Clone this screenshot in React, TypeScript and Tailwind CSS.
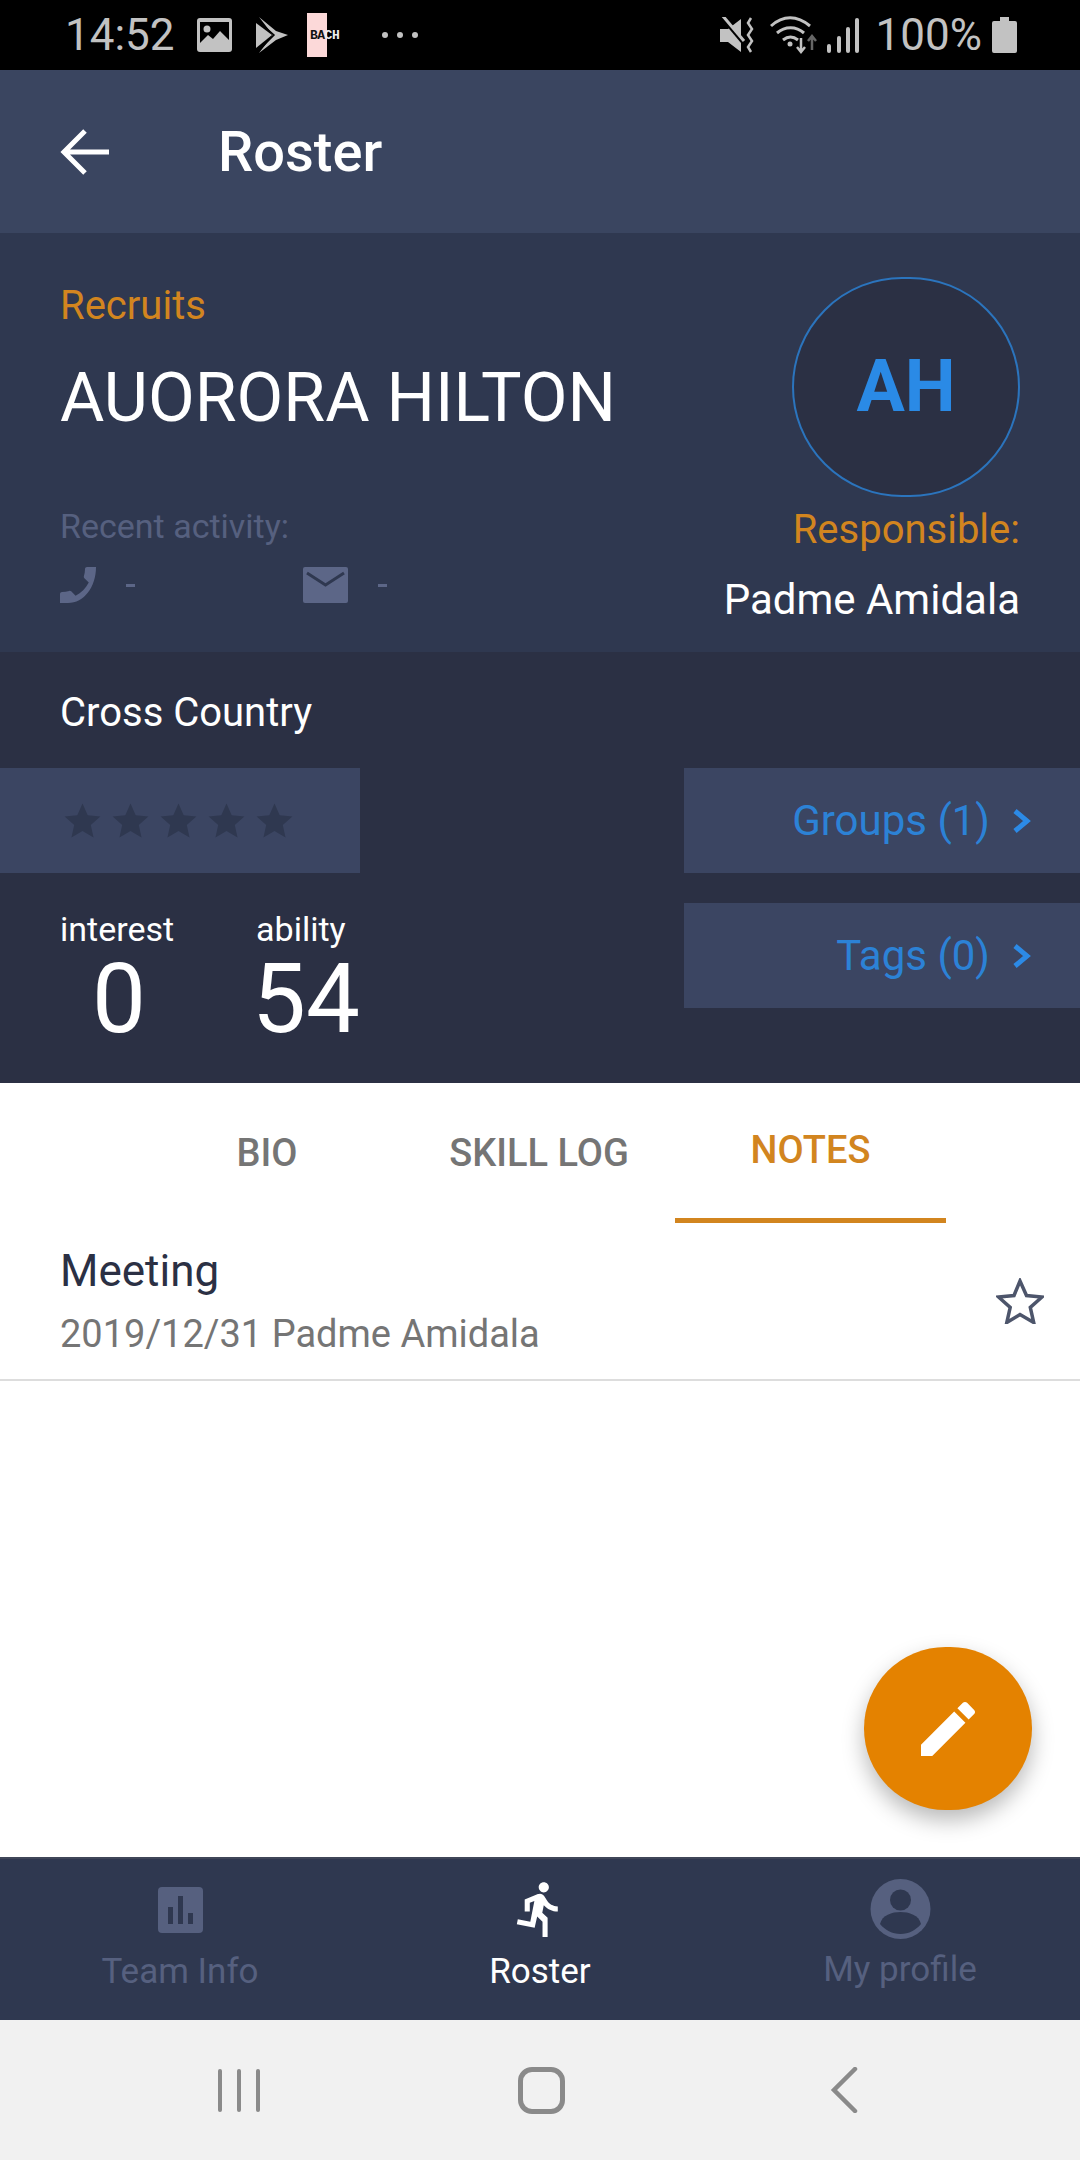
const StatusBar = () => {
  return (
    <div className="flex h-[70px] items-center bg-black pl-[65px] text-[#c2c2c2]">
      <span className="w-[132px] shrink-0 text-[44px] leading-none">14:52</span>
      <svg width="35" height="34" viewBox="0 0 35 34" className="shrink-0">
        <rect width="35" height="34" rx="3" fill="#c2c2c2" />
        <rect x="3" y="4" width="29" height="23" fill="#000" />
        <circle cx="10" cy="11" r="3.5" fill="#c2c2c2" />
        <path d="M3 25l8-8 5 4 7-8 9 9v5H3z" fill="#c2c2c2" />
      </svg>
      <svg width="32" height="36" viewBox="0 0 32 36" className="ml-[24px] shrink-0">
        <path d="M0 6l16 12L0 31z" fill="#c2c2c2" />
        <path d="M3 0l17 14 12 4-12 5L3 36l14-18z" fill="#c2c2c2" />
        <path d="M0 2l18 16L2 34" fill="none" stroke="#000" strokeWidth="1.5" />
      </svg>
      <div className="ml-[19px] flex h-[44px] w-[40px] shrink-0 items-center bg-[linear-gradient(90deg,#fcd9d9_50%,#000_50%)] font-['Liberation_Mono',monospace] text-[13px] font-bold leading-none tracking-[-0.5px] text-[#111]">
        <span className="pl-[3px]">BA</span>
        <span className="text-[#eee]">CH</span>
      </div>
      <div className="ml-[35px] flex shrink-0 gap-[9px]">
        <span className="size-[6px] rounded-full bg-[#c2c2c2]" />
        <span className="size-[6px] rounded-full bg-[#c2c2c2]" />
        <span className="size-[6px] rounded-full bg-[#c2c2c2]" />
      </div>
      <svg width="36" height="37" viewBox="0 0 36 37" className="ml-auto shrink-0">
        <path d="M0 12h8L21 2v33L8 25H0z" fill="#c2c2c2" />
        <path d="M2 1l21 25" stroke="#000" strokeWidth="3" />
        <path d="M2 -2l22 26" stroke="#c2c2c2" strokeWidth="3" />
        <path d="M31 1l-3 5 4 6-4 6 4 6-4 6 3 5" fill="none" stroke="#c2c2c2" strokeWidth="2.5" />
      </svg>
      <svg width="48" height="38" viewBox="0 0 48 38" className="ml-[14px] shrink-0">
        <path d="M1 10C13-1 27-1 40 10M7 17c8-7 19-7 27 0M13 24c5-4 10-4 15 0" fill="none" stroke="#c2c2c2" strokeWidth="3" />
        <circle cx="20" cy="28" r="2.5" fill="#c2c2c2" />
        <path d="M31 22v13M27 31l4 5 4-5" fill="none" stroke="#c2c2c2" strokeWidth="2.5" />
        <path d="M42 34V21M38 25l4-5 4 5" fill="none" stroke="#666" strokeWidth="2.5" />
      </svg>
      <svg width="32" height="35" viewBox="0 0 32 35" className="ml-[9px] shrink-0">
        <rect x="0" y="26" width="4" height="9" rx="2" fill="#c2c2c2" />
        <rect x="10" y="18" width="4" height="17" rx="2" fill="#c2c2c2" />
        <rect x="19" y="9" width="4" height="26" rx="2" fill="#c2c2c2" />
        <rect x="28" y="0" width="4" height="35" rx="2" fill="#c2c2c2" />
      </svg>
      <span className="ml-[17px] shrink-0 text-[44px] leading-none">100%</span>
      <svg width="25" height="36" viewBox="0 0 25 36" className="ml-[10px] mr-[63px] shrink-0">
        <path d="M8 0h9v4h6a2 2 0 012 2v28a2 2 0 01-2 2H2a2 2 0 01-2-2V6a2 2 0 012-2h6z" fill="#c2c2c2" />
      </svg>
    </div>
  );
};

const Star = ({ className }: { className: string }) => {
  return (
    <svg viewBox="0 0 24 24" className={className}>
      <path d="M12 1.5l3.2 7.2 7.8.8-5.9 5.2 1.7 7.7L12 18.4l-6.8 4 1.7-7.7L1 9.5l7.8-.8z" fill="currentColor" />
    </svg>
  );
};

const LinkButton = ({ label }: { label: string }) => {
  return (
    <div className="flex h-[105px] items-center justify-end bg-[#3b4562] pr-[48px] text-[42px] text-[#2c82d6]">
      <span>{label}</span>
      <svg width="20" height="26" viewBox="0 0 20 26" className="ml-[22px]">
        <path d="M3 3l12 10L3 23" fill="none" stroke="#2c8ae6" strokeWidth="5" />
      </svg>
    </div>
  );
};

export default function App() {
  return (
    <div className="flex h-[2160px] w-[1080px] flex-col overflow-hidden bg-white font-['Roboto',sans-serif]">
      <StatusBar />

      <div className="flex h-[163px] items-center bg-[#3a4560] pl-[60px] text-white">
        <svg width="50" height="46" viewBox="0 0 50 46">
          <path d="M25 2L4 23l21 21M4 23h45" fill="none" stroke="#fff" strokeWidth="5" />
        </svg>
        <h1 className="ml-[108px] text-[56px] font-medium leading-none">Roster</h1>
      </div>

      <div className="flex h-[419px] justify-between bg-[#2f3850] px-[60px]">
        <div>
          <p className="pt-[50px] text-[40px] leading-[46px] text-[#d2851f]">Recruits</p>
          <p className="mt-[29px] text-[68px] leading-[80px] text-white">AUORORA HILTON</p>
          <p className="mt-[68px] text-[34px] leading-[40px] text-[#56607f]">Recent activity:</p>
          <div className="mt-[21px] flex items-center text-[#5c6687]">
            <svg width="36" height="36" viewBox="3 3 18 18" className="-scale-x-100">
              <path d="M6.62 10.79c1.44 2.83 3.76 5.14 6.59 6.59l2.2-2.2c.27-.27.67-.36 1.02-.24 1.12.37 2.33.57 3.57.57.55 0 1 .45 1 1V21H17C9 21 3 13 3 3h4.5c.55 0 1 .45 1 1 0 1.25.2 2.45.57 3.57.11.35.03.74-.25 1.02l-2.2 2.2z" fill="currentColor" />
            </svg>
            <span className="ml-[30px] h-[3px] w-[9px] bg-current" />
            <svg width="45" height="36" viewBox="0 0 45 36" className="ml-[168px]">
              <rect width="45" height="36" rx="2" fill="currentColor" />
              <path d="M4 6l18.500 12L41 6" fill="none" stroke="#2f3850" strokeWidth="3" />
            </svg>
            <span className="ml-[30px] h-[3px] w-[9px] bg-current" />
          </div>
        </div>
        <div className="flex flex-col items-end">
          <div className="mt-[44px] flex h-[220px] w-[228px] items-center justify-center rounded-full border-2 border-[#2b74bd] bg-[#2b3044] text-[72px] font-bold leading-none text-[#2a8ae6]">
            AH
          </div>
          <p className="mt-[10px] text-[40px] leading-[46px] text-[#d2851f]">Responsible:</p>
          <p className="mt-[22px] text-[42px] leading-[50px] text-white">Padme Amidala</p>
        </div>
      </div>

      <div className="h-[431px] bg-[#2b3044]">
        <p className="pl-[60px] pt-[38px] text-[40px] leading-[46px] text-white">Cross Country</p>
        <div className="mt-[32px] flex justify-between">
          <div className="w-[360px]">
            <div className="flex h-[105px] items-center gap-[9px] bg-[#3b4562] pl-[63px] text-[#2f3850]">
              <Star className="size-[39px]" />
              <Star className="size-[39px]" />
              <Star className="size-[39px]" />
              <Star className="size-[39px]" />
              <Star className="size-[39px]" />
            </div>
            <div className="mt-[36px] flex pl-[60px] text-white">
              <div className="w-[242px]">
                <p className="text-[34px] leading-[40px]">interest</p>
                <p className="pl-[32px] text-[96px] leading-[100px]">0</p>
              </div>
              <div>
                <p className="text-[34px] leading-[40px]">ability</p>
                <p className="-ml-[4px] text-[96px] leading-[100px]">54</p>
              </div>
            </div>
          </div>
          <div className="flex w-[396px] flex-col gap-[30px]">
            <LinkButton label="Groups (1)" />
            <LinkButton label="Tags (0)" />
          </div>
        </div>
      </div>

      <div className="flex h-[140px] pl-[131px] text-[38px] font-medium text-[#757575]">
        <div className="flex w-[272px] items-center justify-center">BIO</div>
        <div className="flex w-[272px] items-center justify-center">SKILL LOG</div>
        <div className="flex w-[271px] items-center justify-center border-b-[5px] border-[#d2851f] text-[#d2851f]">NOTES</div>
      </div>

      <div className="relative flex-1">
        <div className="flex h-[158px] items-center justify-between border-b-2 border-[#dddddd] pl-[60px] pr-[36px]">
          <div>
            <p className="text-[44px] leading-[50px] text-[#2b3044]">Meeting</p>
            <p className="mt-[16px] text-[38px] leading-[44px] text-[#757575]">2019/12/31 Padme Amidala</p>
          </div>
          <svg width="48" height="46" viewBox="0 0 48 46">
            <path d="M24 3l6.500 14.500 15.500 1.500-11.700 10.400 3.400 15.100L24 36.500 10.800 44.500l3.400-15.100L2.500 19 18 17.500z" fill="none" stroke="#4d556b" strokeWidth="3.500" />
          </svg>
        </div>
        <div className="absolute left-[864px] top-[424px] flex h-[163px] w-[168px] items-center justify-center rounded-full bg-[#e48200] shadow-[0_10px_22px_rgba(0,0,0,0.28)]">
          <svg width="72" height="72" viewBox="0 0 24 24">
            <path d="M3 17.250V21h3.750L17.810 9.940l-3.750-3.750L3 17.250zM20.710 7.040c.39-.39.39-1.020 0-1.410l-2.340-2.340c-.39-.39-1.020-.39-1.410 0l-1.830 1.830 3.750 3.750 1.830-1.830z" fill="#fff" />
          </svg>
        </div>
      </div>

      <div className="flex h-[163px] border-t-2 border-[#3f4658] bg-[#2f3850] text-[35px] leading-[40px] text-[#56607f]">
        <div className="flex w-[360px] flex-col items-center pt-[28px]">
          <svg width="45" height="46" viewBox="0 0 45 46">
            <rect width="45" height="46" rx="4" fill="#56607f" />
            <rect x="10" y="20" width="5" height="17" fill="#2f3850" />
            <rect x="20" y="9" width="5" height="28" fill="#2f3850" />
            <rect x="30" y="26" width="5" height="11" fill="#2f3850" />
          </svg>
          <span className="mt-[19px]">Team Info</span>
        </div>
        <div className="flex w-[360px] flex-col items-center pt-[22px] text-white">
          <svg width="58" height="56" viewBox="4 1 16 22">
            <path d="M13.490 5.480c1.100 0 2-.9 2-2s-.9-2-2-2-2 .9-2 2 .9 2 2 2zm-3.600 13.900l1-4.400 2.100 2v6h2v-7.500l-2.100-2 .6-3c1.300 1.500 3.300 2.500 5.500 2.500v-2c-1.900 0-3.500-1-4.300-2.400l-1-1.600c-.4-.6-1-1-1.700-1-.3 0-.5.1-.8.1l-5.200 2.200v4.700h2v-3.400l1.800-.7-1.600 8.100-4.900-1-.4 2 7 1.400z" fill="#fff" />
          </svg>
          <span className="mt-[15px]">Roster</span>
        </div>
        <div className="flex w-[360px] flex-col items-center pt-[20px]">
          <svg width="61" height="60" viewBox="0 0 61 60">
            <circle cx="30.500" cy="30" r="30" fill="#56607f" />
            <circle cx="30.500" cy="21" r="10.500" fill="#2f3850" />
            <path d="M10 45c2-9 12-12 20.500-12S49 36 51 45c-5 6-12 10-20.500 10S15 51 10 45z" fill="#2f3850" />
          </svg>
          <span className="mt-[11px]">My profile</span>
        </div>
      </div>

      <div className="flex h-[140px] items-center bg-[#f1f1f1] pl-[218px]">
        <div className="flex h-[43px] w-[42px] justify-between">
          <span className="w-[4px] rounded-full bg-[#8a8a8a]" />
          <span className="w-[4px] rounded-full bg-[#8a8a8a]" />
          <span className="w-[4px] rounded-full bg-[#8a8a8a]" />
        </div>
        <div className="ml-[258px] h-[47px] w-[47px] rounded-[14px] border-[5px] border-[#8a8a8a]" />
        <svg width="28" height="46" viewBox="0 0 28 46" className="ml-[265px]">
          <path d="M25 2L4 23l21 21" fill="none" stroke="#8a8a8a" strokeWidth="4.500" strokeLinecap="round" />
        </svg>
      </div>
    </div>
  );
}
